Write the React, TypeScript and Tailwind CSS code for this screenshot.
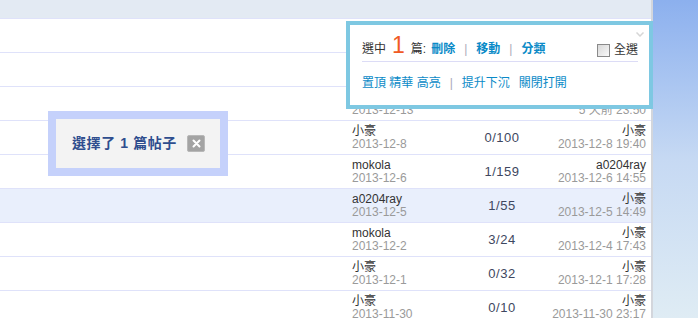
import React from 'react';

const ROWS = [
  { author: '', date: '', count: '', last: '', lastDate: '' },
  { author: '', date: '', count: '', last: '', lastDate: '' },
  { author: '', date: '2013-12-13', count: '', last: '', lastDate: '5 天前 23:50' },
  { author: '小豪', date: '2013-12-8', count: '0/100', last: '小豪', lastDate: '2013-12-8 19:40' },
  { author: 'mokola', date: '2013-12-6', count: '1/159', last: 'a0204ray', lastDate: '2013-12-6 14:55' },
  { author: 'a0204ray', date: '2013-12-5', count: '1/55', last: '小豪', lastDate: '2013-12-5 14:49', active: true },
  { author: 'mokola', date: '2013-12-2', count: '3/24', last: '小豪', lastDate: '2013-12-4 17:43' },
  { author: '小豪', date: '2013-12-1', count: '0/32', last: '小豪', lastDate: '2013-12-1 17:28' },
  { author: '小豪', date: '2013-11-30', count: '0/10', last: '小豪', lastDate: '2013-11-30 23:17' },
];

const FONT = 'font-["Liberation_Sans","Noto_Sans_CJK_TC",sans-serif]';

const Sep = () => <span className="mx-[9px] text-[#a8a8b8]">|</span>;

const App: React.FC = () => {
  return (
    <div className={`relative flex w-[698px] h-[318px] overflow-hidden bg-white ${FONT}`}>
      {/* Thread list */}
      <div className="relative w-[653px] shrink-0 border-r-2 border-[#d3d6dc] bg-white">
        <div className="h-[19px] bg-[#e3eaf3] border-b border-[#dfe2fa]" />
        {ROWS.map((row, i) => (
          <div
            key={i}
            className={`flex items-center h-[34px] border-b border-[#dfe2fa] text-[12px] leading-[13px] ${row.active ? 'bg-[#e9effc]' : 'bg-white'}`}
          >
            <div className="w-[352px] shrink-0" />
            <div className="w-[100px] shrink-0">
              <div className="h-[13px] text-[#333]">{row.author}</div>
              <div className="h-[13px] text-[#9a9a9a]">{row.date}</div>
            </div>
            <div className="w-[100px] shrink-0 text-center text-[13px] text-[#3e4760] tracking-[0.5px]">{row.count}</div>
            <div className="flex-1 text-right pr-[5px]">
              <div className="h-[13px] text-[#333]">{row.last}</div>
              <div className="h-[13px] text-[#9a9a9a]">{row.lastDate}</div>
            </div>
          </div>
        ))}

        {/* Selected toast */}
        <div className="absolute left-[48px] top-[111px] w-[180px] h-[65px] border-[8px] border-[#c5d1fb] bg-[#f3f3f3] flex items-center justify-between pl-[16px] pr-[15px]">
          <span className="text-[14px] font-bold text-[#2e4d8e] tracking-[0.6px] whitespace-nowrap">選擇了 1 篇帖子</span>
          <span className="flex items-center justify-center w-[18px] h-[17px] rounded-[2px] bg-[#a3a3a3] border border-[#b8b8b8]">
            <svg width="9" height="9" viewBox="0 0 9 9">
              <path d="M1.5 1.5 L7.5 7.5 M7.5 1.5 L1.5 7.5" stroke="#fff" strokeWidth="2" strokeLinecap="round" />
            </svg>
          </span>
        </div>
      </div>

      {/* Background */}
      <div className="flex-1 bg-gradient-to-b from-[#8cb0ee] via-[#c6d9f3] to-[#dfecf4]" />

      {/* Batch action panel */}
      <div className="absolute left-[346px] top-[21px] w-[307px] h-[88px] border-[4px] border-[#7ec8e2] bg-white">
        <div className="relative h-full pt-[12px] px-[12px] pr-[11px] text-[12px]">
          <svg className="absolute top-[7px] right-[5px]" width="8" height="5" viewBox="0 0 8 5">
            <path d="M0.5 0.5 L4 4 L7.5 0.5" fill="none" stroke="#d6d6d6" strokeWidth="1.5" />
          </svg>
          <div className="flex items-end justify-between h-[25px] pb-[3px] border-b border-[#dcdcf6]">
            <div className="flex items-baseline text-[#333]">
              <span>選中</span>
              <span className="mx-[6px] text-[23px] leading-[18px] font-light text-[#f05a24]">1</span>
              <span>篇:</span>
              <span className="ml-[5px] font-bold text-[#0a8ac7]">刪除</span>
              <Sep />
              <span className="font-bold text-[#0a8ac7]">移動</span>
              <Sep />
              <span className="font-bold text-[#0a8ac7]">分類</span>
            </div>
            <label className="flex items-center gap-[4px] text-[#333] -mb-[1px]">
              <span className="w-[13px] h-[13px] border border-[#8a8a8a] bg-gradient-to-br from-[#d8d8d8] to-[#fafafa]" />
              <span>全選</span>
            </label>
          </div>
          <div className="flex items-center h-[42px] text-[#0a8ac7]">
            <span>置頂 精華 高亮</span>
            <Sep />
            <span>提升下沉</span>
            <span className="ml-[9px]">關閉打開</span>
          </div>
        </div>
      </div>
    </div>
  );
};

export default App;
